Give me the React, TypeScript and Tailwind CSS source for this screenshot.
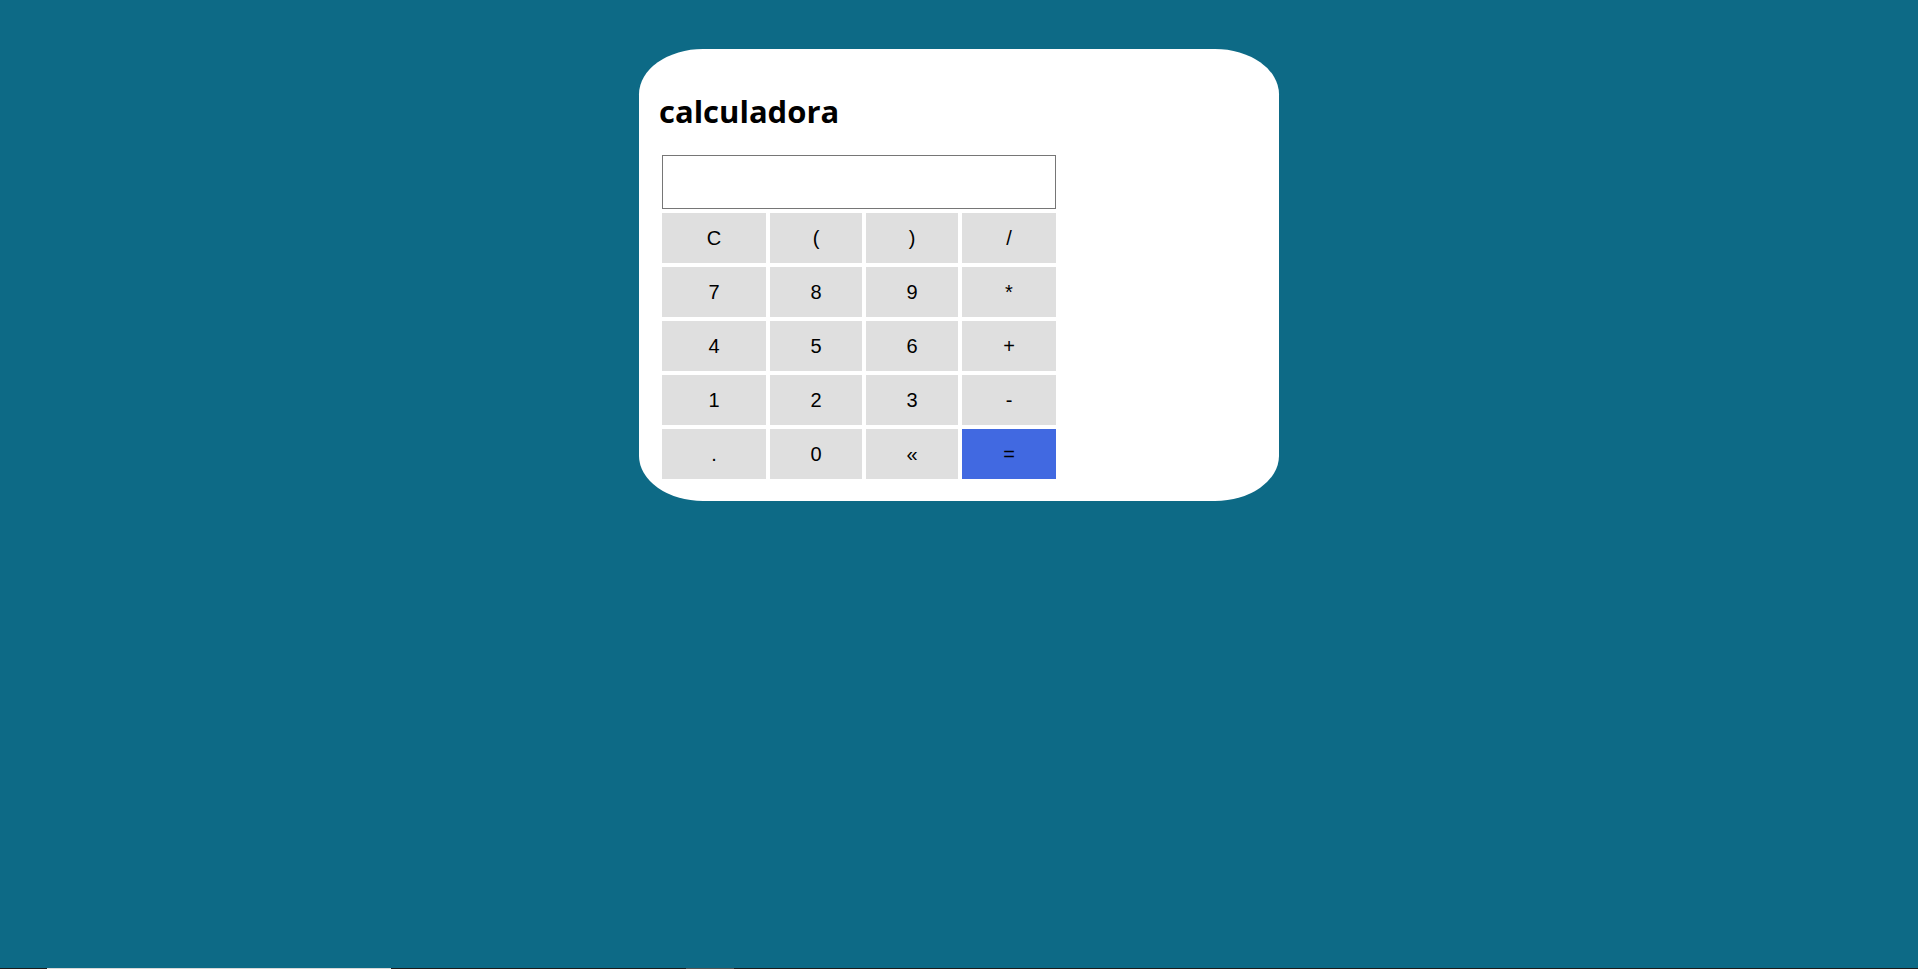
import React from "react";

const rows: string[][] = [
  ["C", "(", ")", "/"],
  ["7", "8", "9", "*"],
  ["4", "5", "6", "+"],
  ["1", "2", "3", "-"],
  [".", "0", "«", "="],
];

export default function App() {
  return (
    <div className="min-h-screen w-full bg-[#0d6a86] flex flex-col">
      <div className="flex-1 flex justify-center pt-[49px]">
        <div className="w-[640px] h-[452px] bg-white rounded-[10%] pl-[23px] pt-[41px] flex flex-col">
          <h2
            className="text-[31px] leading-[42px] font-bold text-black -ml-[3px]"
            style={{ fontFamily: '"Open Sans", sans-serif' }}
          >
            calculadora
          </h2>
          <input
            type="text"
            className="mt-[23px] w-[394px] h-[54px] border border-[#767676] bg-white outline-none"
          />
          <div
            className="mt-[4px] grid grid-cols-[104px_92px_92px_94px] auto-rows-[50px] gap-[4px] w-[394px]"
            style={{ fontFamily: '"Liberation Sans", Arial, sans-serif' }}
          >
            {rows.flat().map((k, i) => (
              <button
                key={i}
                className={
                  "flex items-center justify-center text-[20px] text-black " +
                  (k === "=" ? "bg-[#4169e1]" : "bg-[#dfdfdf]")
                }
              >
                {k}
              </button>
            ))}
          </div>
        </div>
      </div>
      <div className="h-px w-full bg-[#1c1c1c] flex">
        <div className="w-[47px]" />
        <div className="w-[344px] bg-[#d8d8d8]" />
        <div className="w-[295px]" />
        <div className="w-[48px] bg-[#555555]" />
      </div>
    </div>
  );
}
